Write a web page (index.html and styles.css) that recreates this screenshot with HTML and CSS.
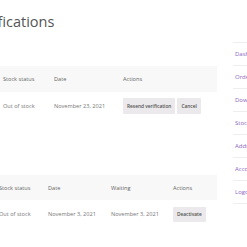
FILE: index.html
```html
<!DOCTYPE html>
<html>
<head>
<meta charset="utf-8">
<link rel="stylesheet" href="styles.css">
</head>
<body>
<div class="page">
  <main class="content">
    <h1 class="title">Notifications</h1>
    <table class="tbl tbl-one">
      <colgroup><col class="c-prod1"><col class="c-stock1"><col class="c-date1"><col></colgroup>
      <thead>
        <tr><th>Product</th><th>Stock status</th><th>Date</th><th>Actions</th></tr>
      </thead>
      <tbody>
        <tr>
          <td>Hoodie</td><td>Out of stock</td><td>November 23, 2021</td>
          <td><span class="actions"><button class="btn">Resend verification</button><button class="btn">Cancel</button></span></td>
        </tr>
      </tbody>
    </table>
    <table class="tbl tbl-two">
      <colgroup><col class="c-prod2"><col class="c-stock2"><col class="c-date2"><col class="c-wait2"><col></colgroup>
      <thead>
        <tr><th>Product</th><th>Stock status</th><th>Date</th><th>Waiting</th><th>Actions</th></tr>
      </thead>
      <tbody>
        <tr>
          <td>Beanie</td><td>Out of stock</td><td>November 3, 2021</td><td>November 3, 2021</td>
          <td><button class="btn">Deactivate</button></td>
        </tr>
      </tbody>
    </table>
  </main>
  <nav class="side">
    <a href="#">Dashboard</a>
    <a href="#">Orders</a>
    <a href="#">Downloads</a>
    <a href="#">Stock notifications</a>
    <a href="#">Addresses</a>
    <a href="#">Account details</a>
    <a href="#">Logout</a>
  </nav>
</div>
</body>
</html>
```
FILE: styles.css
```css
html, body {
  margin: 0;
  padding: 0;
  background: #fff;
  overflow: hidden;
}
body {
  font-family: "Open Sans", "Noto Sans", sans-serif;
  color: #666;
}
.page {
  display: flex;
  width: 247px;
  height: 247px;
  overflow: hidden;
}
.content {
  flex: none;
  width: 277px;
  margin-left: -60px;
}
.title {
  margin: 10px 0 0 29px;
  font-size: 14.5px;
  line-height: 24px;
  font-weight: 400;
  color: #555;
}
.tbl {
  border-collapse: collapse;
  table-layout: fixed;
  width: 277px;
  font-size: 5.6px;
}
.tbl-one { margin-top: 32px; }
.tbl-two { margin-top: 55px; }
.c-prod1 { width: 60px; }
.c-stock1 { width: 51px; }
.c-date1 { width: 69px; }
.c-prod2 { width: 56px; }
.c-stock2 { width: 49px; }
.c-date2 { width: 63px; }
.c-wait2 { width: 62px; }
.tbl th {
  background: #f8f8f8;
  height: 26px;
  padding: 0 3px;
  text-align: left;
  font-weight: 400;
  color: #666;
  white-space: nowrap;
  overflow: hidden;
}
.tbl-two th { height: 25px; }
.tbl td {
  height: 28px;
  padding: 0 3px;
  color: #777;
  white-space: nowrap;
  overflow: hidden;
}
.actions {
  display: flex;
  gap: 2px;
}
.btn {
  font-family: "Open Sans", "Noto Sans", sans-serif;
  font-size: 4.8px;
  font-weight: 600;
  color: #515151;
  background: #ebe9eb;
  border: 0;
  border-radius: 1px;
  height: 16px;
  padding: 0 4px;
  white-space: nowrap;
}
.tbl-two .btn { height: 15px; }
.side {
  flex: none;
  width: 80px;
  margin-left: 16px;
  margin-top: 42px;
  display: flex;
  flex-direction: column;
  border-top: 1px solid #eee;
}
.side a {
  display: block;
  height: 22px;
  line-height: 22px;
  padding-left: 2px;
  border-bottom: 1px solid #eee;
  font-size: 6px;
  color: #8a66c0;
  text-decoration: none;
  white-space: nowrap;
}
```
